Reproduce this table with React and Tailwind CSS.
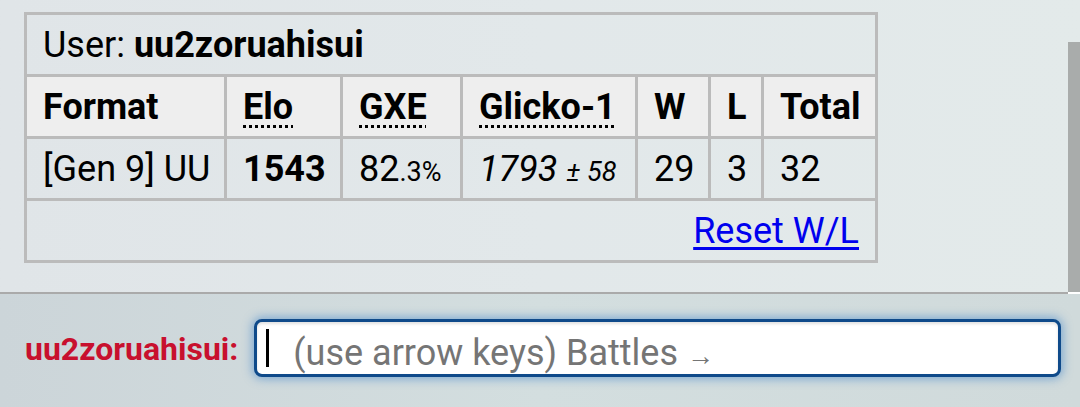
export default function App() {
  const cell = "border-[3px] border-[#bbbbbb] px-[16px] py-0 h-[62px] align-middle whitespace-nowrap";
  return (
    <div
      className="w-[1080px] h-[407px] overflow-hidden flex flex-col text-black"
      style={{ fontFamily: "Roboto, 'Noto Sans', sans-serif" }}
    >
      <div className="h-[292px] flex bg-gradient-to-r from-[#e0e5e8] via-[#e2e8ea] to-[#e3eaea]">
        <div className="flex-1 pl-[24px] pt-[12px]">
          <table className="border-collapse table-fixed w-[851px] text-[36px] leading-none">
            <colgroup>
              <col className="w-[200px]" />
              <col className="w-[116px]" />
              <col className="w-[120px]" />
              <col className="w-[175px]" />
              <col className="w-[73px]" />
              <col className="w-[53px]" />
              <col className="w-[114px]" />
            </colgroup>
            <tbody>
              <tr>
                <td colSpan={7} className={cell + " text-left"}>
                  User: <strong className="font-bold">uu2zoruahisui</strong>
                </td>
              </tr>
              <tr className="bg-[#eeeeee]">
                <th className={cell + " text-left font-bold"}>Format</th>
                <th className={cell + " text-left font-bold"}>
                  <abbr className="underline decoration-dotted decoration-[3px] underline-offset-[6px]">Elo</abbr>
                </th>
                <th className={cell + " text-left font-bold"}>
                  <abbr className="underline decoration-dotted decoration-[3px] underline-offset-[6px]">GXE</abbr>
                </th>
                <th className={cell + " text-left font-bold"}>
                  <abbr className="underline decoration-dotted decoration-[3px] underline-offset-[6px]">Glicko-1</abbr>
                </th>
                <th className={cell + " text-left font-bold"}>W</th>
                <th className={cell + " text-left font-bold"}>L</th>
                <th className={cell + " text-left font-bold"}>Total</th>
              </tr>
              <tr>
                <td className={cell}>[Gen 9] UU</td>
                <td className={cell + " font-bold"}>1543</td>
                <td className={cell}>
                  82<span className="text-[27px]">.3%</span>
                </td>
                <td className={cell + " italic"}>
                  1793 <span className="text-[27px]">± 58</span>
                </td>
                <td className={cell}>29</td>
                <td className={cell}>3</td>
                <td className={cell}>32</td>
              </tr>
              <tr>
                <td colSpan={7} className={cell + " text-right"}>
                  <a href="#" className="text-[#0000ee] underline underline-offset-[4px]">Reset W/L</a>
                </td>
              </tr>
            </tbody>
          </table>
        </div>
        <div className="w-[12px] mt-[42px] bg-[#a9acab]" />
      </div>
      <div className="h-[2px] bg-[#aaaaaa] mr-[12px]" />
      <div className="flex-1 flex items-center bg-gradient-to-r from-[#ccd5d9] via-[#d3dedf] to-[#d0dadb] pl-[25px] pr-[19px]">
        <span className="text-[#c8102e] font-bold text-[32px] mr-[16px] mt-[-4px]">uu2zoruahisui:</span>
        <div className="flex-1 h-[58px] bg-white border-[3px] border-[#0f4a8a] rounded-[8px] shadow-[0_0_10px_2px_rgba(60,130,200,0.55),inset_0_2px_3px_rgba(0,0,0,0.12)] flex items-center pl-[9px] mt-[-6px]">
          <span className="w-[3px] h-[38px] bg-black mr-[24px]" />
          <span className="text-[#757575] text-[36px] mt-[10px]">
            (use arrow keys) Battles <span className="text-[27px]">→</span>
          </span>
        </div>
      </div>
    </div>
  );
}
